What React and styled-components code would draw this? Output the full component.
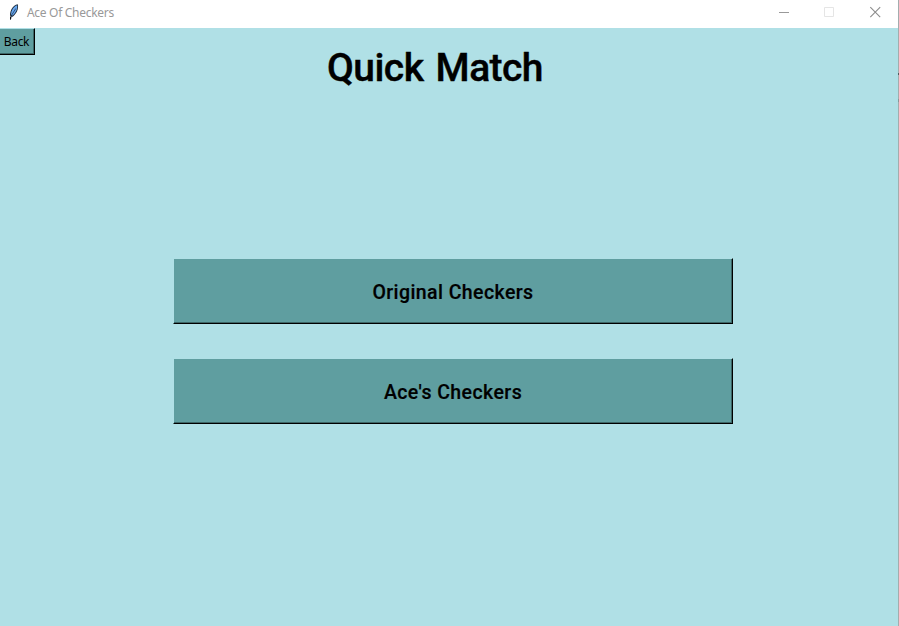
import React from 'react';
import styled, { createGlobalStyle } from 'styled-components';

const GlobalStyle = createGlobalStyle`
  * { box-sizing: border-box; }
  body { margin: 0; overflow: hidden; }
`;

const Window = styled.div`
  width: 899px;
  height: 626px;
  display: flex;
  flex-direction: column;
  padding-right: 1px;
  background:
    linear-gradient(#4f5b5d, #4f5b5d) 898px 73px / 1px 2px no-repeat,
    linear-gradient(#8a9697, #8a9697) 898px 99px / 1px 3px no-repeat,
    linear-gradient(#a3adae, #a3adae) 898px 0 / 1px 100% no-repeat,
    #b0e0e6;
  color: #000;
`;

const TitleBar = styled.header`
  height: 28px;
  flex: none;
  display: flex;
  align-items: flex-start;
  background: #fff;
  padding: 4px 17px 0 8px;
`;

const WindowTitle = styled.span`
  flex: 1;
  margin-left: 7px;
  font: 12px/18px 'Noto Sans', sans-serif;
  letter-spacing: -0.3px;
  color: #999;
  white-space: nowrap;
`;

const Controls = styled.div`
  display: flex;
  gap: 34px;
  padding-top: 2px;
`;

const Content = styled.main`
  display: flex;
  flex-direction: column;
  align-items: flex-start;
`;

const RaisedButton = styled.button`
  border: 1px solid;
  border-color: #b0e0e6 #000 #000 #b0e0e6;
  border-radius: 0;
  background: #5f9ea0;
  box-shadow: inset -1px -1px 0 #3d6667;
  color: #000;
  padding: 0;
  display: flex;
  align-items: center;
  justify-content: center;
  white-space: nowrap;
`;

const BackButton = styled(RaisedButton)`
  width: 36px;
  height: 27px;
  margin-left: -1px;
  padding-right: 1px;
  font: 12px/16px 'Noto Sans', sans-serif;
  letter-spacing: -0.35px;
`;

const Heading = styled.h1`
  margin: -10px 0 0 327px;
  font: 500 39px/46px Roboto, sans-serif;
  letter-spacing: -0.55px;
  word-spacing: 3px;
  -webkit-text-stroke: 0.4px #000;
  white-space: nowrap;
`;

const Menu = styled.nav`
  display: flex;
  flex-direction: column;
  gap: 34px;
  margin: 167px 0 0 173px;
`;

const MenuButton = styled(RaisedButton)`
  width: 560px;
  height: 66px;
  padding-top: 4px;
  font: 500 19.5px/24px Roboto, sans-serif;
  letter-spacing: 0.42px;
  -webkit-text-stroke: 0.2px #000;
`;

function FeatherIcon() {
  return (
    <svg width="12" height="18" viewBox="0 0 12 18">
      <path d="M2 11.500C2 6.500 4.500 1.500 9.800 .3C11 5 8.300 10.500 4 13Z" fill="#1c2a3a" />
      <path d="M3 10.500C3.300 6 5.800 2.300 9.100 1.200C9.800 5 7.500 9.500 4 11.800Z" fill="#68a8f0" />
      <path d="M2.500 15.500L4 10.500L7.800 4.500" fill="none" stroke="#172d49" strokeWidth=".7" />
      <path d="M2.500 15.500V12.500" stroke="#111" />
    </svg>
  );
}

function MinimizeIcon() {
  return (
    <svg width="11" height="11" viewBox="0 0 11 11">
      <path d="M0 6.500H10" stroke="#999" />
    </svg>
  );
}

function MaximizeIcon() {
  return (
    <svg width="11" height="11" viewBox="0 0 11 11">
      <path d="M.5 1.500H9.500V10.500H.5Z" fill="none" stroke="#e5e5e5" />
    </svg>
  );
}

function CloseIcon() {
  return (
    <svg width="12" height="12" viewBox="0 0 12 12">
      <path d="M1.300 1.200L11.200 11.200M11.200 1.200L1.300 11.200" stroke="#8c8c8c" strokeWidth="1.1" />
    </svg>
  );
}

export default function App() {
  return (
    <>
      <GlobalStyle />
      <Window>
        <TitleBar>
          <FeatherIcon />
          <WindowTitle>Ace Of Checkers</WindowTitle>
          <Controls>
            <MinimizeIcon />
            <MaximizeIcon />
            <CloseIcon />
          </Controls>
        </TitleBar>
        <Content>
          <BackButton>Back</BackButton>
          <Heading>Quick Match</Heading>
          <Menu>
            <MenuButton>Original Checkers</MenuButton>
            <MenuButton>Ace&#39;s Checkers</MenuButton>
          </Menu>
        </Content>
      </Window>
    </>
  );
}
